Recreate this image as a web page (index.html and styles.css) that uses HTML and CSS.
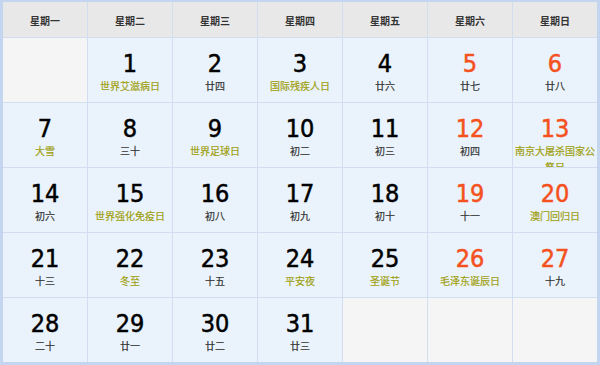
FILE: index.html
```html
<!DOCTYPE html>
<html lang="zh">
<head>
<meta charset="utf-8">
<title>日历</title>
<link rel="stylesheet" href="styles.css">
</head>
<body>
<div class="cal">
  <div class="hd">星期一</div>
  <div class="hd">星期二</div>
  <div class="hd">星期三</div>
  <div class="hd">星期四</div>
  <div class="hd">星期五</div>
  <div class="hd">星期六</div>
  <div class="hd">星期日</div>

  <div class="day empty"></div>
  <div class="day"><span class="num">1</span><span class="fest">世界艾滋病日</span></div>
  <div class="day"><span class="num">2</span><span class="lunar">廿四</span></div>
  <div class="day"><span class="num">3</span><span class="fest">国际残疾人日</span></div>
  <div class="day"><span class="num">4</span><span class="lunar">廿六</span></div>
  <div class="day we"><span class="num">5</span><span class="lunar">廿七</span></div>
  <div class="day we"><span class="num">6</span><span class="lunar">廿八</span></div>

  <div class="day"><span class="num">7</span><span class="fest">大雪</span></div>
  <div class="day"><span class="num">8</span><span class="lunar">三十</span></div>
  <div class="day"><span class="num">9</span><span class="fest">世界足球日</span></div>
  <div class="day"><span class="num">10</span><span class="lunar">初二</span></div>
  <div class="day"><span class="num">11</span><span class="lunar">初三</span></div>
  <div class="day we"><span class="num">12</span><span class="lunar">初四</span></div>
  <div class="day we"><span class="num">13</span><span class="fest">南京大屠杀国家公祭日</span></div>

  <div class="day"><span class="num">14</span><span class="lunar">初六</span></div>
  <div class="day"><span class="num">15</span><span class="fest">世界强化免疫日</span></div>
  <div class="day"><span class="num">16</span><span class="lunar">初八</span></div>
  <div class="day"><span class="num">17</span><span class="lunar">初九</span></div>
  <div class="day"><span class="num">18</span><span class="lunar">初十</span></div>
  <div class="day we"><span class="num">19</span><span class="lunar">十一</span></div>
  <div class="day we"><span class="num">20</span><span class="fest">澳门回归日</span></div>

  <div class="day"><span class="num">21</span><span class="lunar">十三</span></div>
  <div class="day"><span class="num">22</span><span class="fest">冬至</span></div>
  <div class="day"><span class="num">23</span><span class="lunar">十五</span></div>
  <div class="day"><span class="num">24</span><span class="fest">平安夜</span></div>
  <div class="day"><span class="num">25</span><span class="fest">圣诞节</span></div>
  <div class="day we"><span class="num">26</span><span class="fest">毛泽东诞辰日</span></div>
  <div class="day we"><span class="num">27</span><span class="lunar">十九</span></div>

  <div class="day"><span class="num">28</span><span class="lunar">二十</span></div>
  <div class="day"><span class="num">29</span><span class="lunar">廿一</span></div>
  <div class="day"><span class="num">30</span><span class="lunar">廿二</span></div>
  <div class="day"><span class="num">31</span><span class="lunar">廿三</span></div>
  <div class="day empty"></div>
  <div class="day empty"></div>
  <div class="day empty"></div>
</div>
</body>
</html>
```

FILE: styles.css
```css
html, body {
  margin: 0;
  padding: 0;
  background: #ffffff;
}

.cal {
  width: 600px;
  height: 365px;
  box-sizing: border-box;
  display: grid;
  grid-template-columns: repeat(7, 84px);
  grid-template-rows: 35px repeat(5, 64px);
  gap: 1px;
  background: #d2ddef;
  border-style: solid;
  border-color: #c4d5f0;
  border-width: 2px 3px 3px 3px;
  font-family: "Noto Sans CJK SC", "Noto Sans", sans-serif;
}

.hd {
  background: #e8e8e8;
  color: #333;
  font-size: 10px;
  font-weight: bold;
  display: flex;
  align-items: center;
  justify-content: center;
  padding-top: 2px;
}

.day {
  background: #eaf3fb;
  display: flex;
  flex-direction: column;
  align-items: center;
  text-align: center;
  overflow: hidden;
  padding-top: 11px;
  box-sizing: border-box;
}

.day.empty {
  background: #f5f5f5;
}

.num {
  font-family: "DejaVu Sans Condensed", "DejaVu Sans", sans-serif;
  font-size: 25px;
  line-height: 29.2px;
  color: #000;
  -webkit-text-stroke: 0.5px currentColor;
}

.we .num {
  color: #f4511e;
}

.lunar,
.fest {
  font-size: 10px;
  line-height: 16px;
  padding: 0 2px;
  -webkit-text-stroke: 0.2px currentColor;
}

.lunar {
  color: #333;
}

.fest {
  color: #a09f10;
}
```
